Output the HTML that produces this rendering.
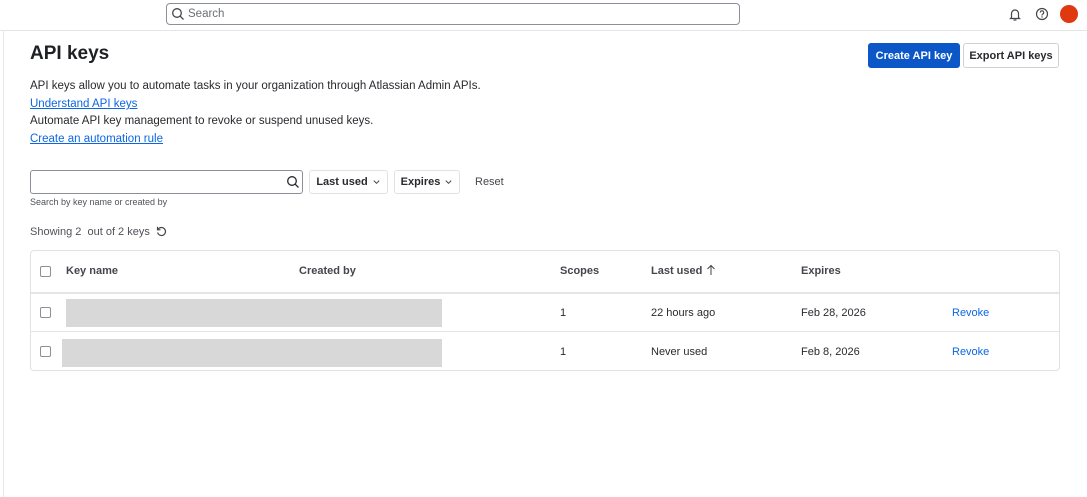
<!DOCTYPE html>
<html><head><meta charset="utf-8"><style>
*{box-sizing:border-box;margin:0;padding:0}
body{width:1087px;height:497px;background:#fff;font-family:"Liberation Sans",sans-serif;color:#292a2e;position:relative;overflow:hidden;font-size:12px}
.a{position:absolute}
a,.link{color:#0c66e4;text-decoration:underline}
.hdr{left:0;top:0;width:1087px;height:31px;border-bottom:1px solid #e4e5e7}
.side{left:3px;top:31px;width:1px;height:466px;background:#e8e9eb}
.btn{border:1px solid #d0d2d6;border-radius:3px;background:#fff;font-size:11px;color:#292a2e;display:flex;align-items:center;justify-content:center;white-space:nowrap}
.th{font-weight:600;font-size:11px;color:#44464c}
.cb{width:11px;height:11px;border:1px solid #8c8f97;border-radius:2px;background:#fff}
.td{font-size:11px;color:#292a2e}
.rv{font-size:11px;color:#0c66e4}
.bar{background:#d8d8d8}
</style></head><body>
<div class="a hdr"></div>
<div class="a side"></div>
<div class="a" style="left:166px;top:3px;width:574px;height:22px;border:1px solid #8c8f97;border-radius:4px"></div>
<svg class="a" style="left:171px;top:7px" width="14" height="14" viewBox="0 0 14 14"><circle cx="6" cy="6" r="4.3" fill="none" stroke="#44464c" stroke-width="1.3"/><path d="M9.2 9.2L12.5 12.5" stroke="#44464c" stroke-width="1.3"/></svg>
<div class="a" style="left:188px;top:8px;font-size:11.5px;color:#6b6e76">Search</div>
<svg class="a" style="left:1008px;top:7px" width="14" height="15" viewBox="0 0 14 15"><path d="M3.5 10.5V6.5a3.5 3.5 0 0 1 7 0v4l1 1H2.5z" fill="none" stroke="#44464c" stroke-width="1.2"/><path d="M5.5 13h3" stroke="#44464c" stroke-width="1.2"/></svg>
<svg class="a" style="left:1035px;top:7px" width="14" height="14" viewBox="0 0 14 14"><circle cx="7" cy="7" r="5.5" fill="none" stroke="#44464c" stroke-width="1.2"/><path d="M5.3 5.5a1.7 1.7 0 1 1 2.3 1.6c-.5.2-.6.5-.6 1v.4" fill="none" stroke="#44464c" stroke-width="1.1"/><circle cx="7" cy="10" r=".7" fill="#44464c"/></svg>
<div class="a" style="left:1060px;top:5px;width:18px;height:18px;border-radius:50%;background:#e0380f"></div>

<div class="a" style="left:30px;top:43px;font-size:19px;font-weight:bold;color:#1f2024">API keys</div>
<div class="a btn" style="left:868px;top:43px;width:92px;height:25px;background:#0c57c8;border-color:#0c57c8;color:#fff;font-weight:600">Create API key</div>
<div class="a btn" style="left:963px;top:43px;width:96px;height:25px;font-weight:600">Export API keys</div>

<div class="a" style="left:30px;top:80px;font-size:11.5px">API keys allow you to automate tasks in your organization through Atlassian Admin APIs.</div>
<div class="a link" style="left:30px;top:98px;font-size:11.5px">Understand API keys</div>
<div class="a" style="left:30px;top:115px;font-size:11.5px">Automate API key management to revoke or suspend unused keys.</div>
<div class="a link" style="left:30px;top:133px;font-size:11.5px">Create an automation rule</div>

<div class="a" style="left:30px;top:170px;width:273px;height:24px;border:1px solid #8c8f97;border-radius:3px"></div>
<svg class="a" style="left:286px;top:175px" width="14" height="14" viewBox="0 0 14 14"><circle cx="6" cy="6" r="4.3" fill="none" stroke="#292a2e" stroke-width="1.3"/><path d="M9.2 9.2L12.5 12.5" stroke="#292a2e" stroke-width="1.3"/></svg>
<div class="a btn" style="left:309px;top:170px;width:79px;height:24px;border-color:#e1e2e5;font-weight:600;font-size:11px">Last used <svg width="9" height="8" style="margin-left:4px" viewBox="0 0 10 8"><path d="M2 2.5l3 3 3-3" fill="none" stroke="#44464c" stroke-width="1.1"/></svg></div>
<div class="a btn" style="left:394px;top:170px;width:66px;height:24px;border-color:#e1e2e5;font-weight:600;font-size:11px">Expires <svg width="9" height="8" style="margin-left:4px" viewBox="0 0 10 8"><path d="M2 2.5l3 3 3-3" fill="none" stroke="#44464c" stroke-width="1.1"/></svg></div>
<div class="a" style="left:475px;top:176px;font-size:11px;color:#44464c">Reset</div>
<div class="a" style="left:30px;top:197px;font-size:9px;color:#505258">Search by key name or created by</div>

<div class="a" style="left:30px;top:226px;font-size:11px;color:#505258">Showing 2&nbsp; out of 2 keys</div>
<svg class="a" style="left:155px;top:225px" width="13" height="13" viewBox="0 0 13 13"><path d="M3 4.5A4 4 0 1 1 2.6 7.5" fill="none" stroke="#44464c" stroke-width="1.2"/><path d="M2.5 1.8v3h3" fill="none" stroke="#44464c" stroke-width="1.2"/></svg>

<div class="a" style="left:30px;top:250px;width:1030px;height:121px;border:1px solid #dfe1e4;border-radius:4px"></div>
<div class="a" style="left:31px;top:292px;width:1028px;height:2px;background:#e4e5e7"></div>
<div class="a" style="left:31px;top:331px;width:1028px;height:1px;background:#e4e5e7"></div>

<div class="a cb" style="left:40px;top:266px"></div>
<div class="a th" style="left:66px;top:265px">Key name</div>
<div class="a th" style="left:299px;top:265px">Created by</div>
<div class="a th" style="left:560px;top:265px">Scopes</div>
<div class="a th" style="left:651px;top:265px">Last used</div>
<svg class="a" style="left:706px;top:264px" width="10" height="12" viewBox="0 0 10 12"><path d="M5 11V1.5M1.5 5L5 1.5 8.5 5" fill="none" stroke="#44464c" stroke-width="1"/></svg>
<div class="a th" style="left:801px;top:265px">Expires</div>

<div class="a cb" style="left:40px;top:307px"></div>
<div class="a bar" style="left:66px;top:299px;width:376px;height:28px"></div>
<div class="a td" style="left:560px;top:307px">1</div>
<div class="a td" style="left:651px;top:307px">22 hours ago</div>
<div class="a td" style="left:801px;top:307px">Feb 28, 2026</div>
<div class="a rv" style="left:952px;top:307px">Revoke</div>

<div class="a cb" style="left:40px;top:346px"></div>
<div class="a bar" style="left:62px;top:339px;width:380px;height:28px"></div>
<div class="a td" style="left:560px;top:346px">1</div>
<div class="a td" style="left:651px;top:346px">Never used</div>
<div class="a td" style="left:801px;top:346px">Feb 8, 2026</div>
<div class="a rv" style="left:952px;top:346px">Revoke</div>
</body></html>
